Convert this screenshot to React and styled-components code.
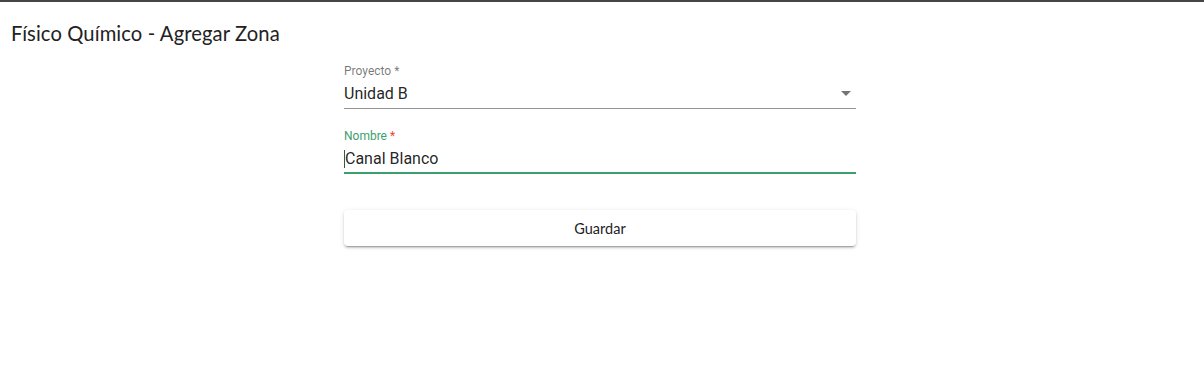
import React from "react";
import styled, { createGlobalStyle } from "styled-components";

const Global = createGlobalStyle`
  html, body { margin: 0; padding: 0; background: #fff; }
  body { font-family: Roboto, "Liberation Sans", sans-serif; }
`;

const Page = styled.div`
  border-top: 2px solid #464646;
  min-height: 380px;
  box-sizing: border-box;
`;

const Title = styled.h1`
  margin: 0;
  padding: 19px 0 0 11px;
  font-family: "Lato", "Open Sans", sans-serif;
  font-weight: 400;
  font-size: 20.2px;
  line-height: 24px;
  color: #222;
  letter-spacing: 0.1px;
`;

const Form = styled.div`
  width: 512px;
  margin: 0 auto;
  padding-top: 19px;
  display: flex;
  flex-direction: column;
  transform: translateX(-2px);
`;

const Field = styled.div`
  display: flex;
  flex-direction: column;
  margin-bottom: ${(p) => p.$mb || 0}px;
`;

const Label = styled.label`
  font-size: 12px;
  line-height: 14px;
  color: ${(p) => (p.$focused ? "#3c9f6c" : "rgba(0,0,0,0.54)")};
`;

const Star = styled.span`
  color: ${(p) => (p.$focused ? "#f44336" : "inherit")};
`;

const InputRow = styled.div`
  display: flex;
  align-items: center;
  padding: 6px 0 ${(p) => (p.$focused ? 4 : 5)}px;
  font-size: 16px;
  line-height: 19px;
  color: rgba(0, 0, 0, 0.87);
  border-bottom: ${(p) => (p.$focused ? "2px solid #3c9f6c" : "1px solid #949494")};
`;

const Value = styled.span`
  flex: 1;
`;

const Caret = styled.span`
  display: inline-block;
  width: 1px;
  height: 18px;
  background: #2e5f44;
  vertical-align: -4px;
`;

const Arrow = styled.svg`
  width: 24px;
  height: 24px;
  margin: -3px -2px -2px 0;
  fill: rgba(0, 0, 0, 0.54);
`;

const Button = styled.button`
  height: 36px;
  border: none;
  border-radius: 4px;
  background: #fff;
  box-shadow: 0 3px 1px -2px rgba(0,0,0,0.2), 0 2px 2px 0 rgba(0,0,0,0.14), 0 1px 5px 0 rgba(0,0,0,0.12);
  font-family: "Lato", "Open Sans", sans-serif;
  font-size: 14.5px;
  color: #222;
  cursor: pointer;
`;

export default function App() {
  return (
    <>
      <Global />
      <Page>
        <Title>Físico Químico - Agregar Zona</Title>
        <Form>
          <Field $mb={20}>
            <Label>
              Proyecto <Star>*</Star>
            </Label>
            <InputRow>
              <Value>Unidad B</Value>
              <Arrow viewBox="0 0 24 24">
                <path d="M7 10l5 5 5-5z" />
              </Arrow>
            </InputRow>
          </Field>
          <Field $mb={36}>
            <Label $focused>
              Nombre <Star $focused>*</Star>
            </Label>
            <InputRow $focused>
              <Value>
                <Caret />
                Canal Blanco
              </Value>
            </InputRow>
          </Field>
          <Button>Guardar</Button>
        </Form>
      </Page>
    </>
  );
}
